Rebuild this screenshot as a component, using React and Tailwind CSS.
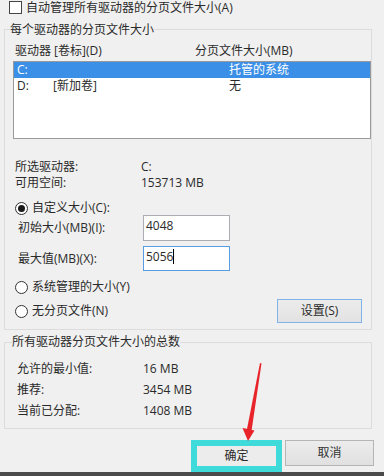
import React from 'react';

const Radio = ({ checked, label }) => (
  <div className="flex items-center">
    <div className="w-[13px] h-[13px] rounded-full border border-[#333] bg-white flex items-center justify-center">
      {checked && <div className="w-[7px] h-[7px] rounded-full bg-[#1a1a1a]" />}
    </div>
    <span className="ml-[4px] leading-[16px]">{label}</span>
  </div>
);

const InfoRow = ({ label, value, className = '' }) => (
  <div className={`flex h-[16px] items-center ${className}`}>
    <span className="w-[126px] shrink-0">{label}</span>
    <span>{value}</span>
  </div>
);

export default function App() {
  return (
    <div className="relative w-[384px] h-[476px] overflow-hidden bg-[#f0f0f0] text-[12px] text-[#2a2a2a] font-['Open_Sans','Noto_Sans_CJK_SC',sans-serif] flex flex-col">
      {/* top checkbox */}
      <div className="h-[21px] pt-[1px] pl-[9px] flex items-start">
        <div className="w-[13px] h-[13px] border border-[#444] bg-white" />
        <span className="ml-[4px] leading-[14px]">自动管理所有驱动器的分页文件大小(A)</span>
      </div>

      {/* per-drive group */}
      <fieldset className="ml-[4px] w-[368px] border border-[#dcdcdc] pb-[6px]">
        <legend className="ml-[5px] leading-[17px]">每个驱动器的分页文件大小</legend>

        <div className="mt-[5px] h-[16px] flex items-center pl-[10px]">
          <span className="w-[180px]">驱动器 [卷标](D)</span>
          <span>分页文件大小(MB)</span>
        </div>

        <div className="mt-[2px] ml-[8px] w-[358px] h-[78px] border border-[#9a9a9a] bg-white">
          <div className="h-[16px] bg-[#3b8fe6] text-white flex items-center">
            <span className="pl-[3px] w-[215px]">C:</span>
            <span>托管的系统</span>
          </div>
          <div className="h-[16px] flex items-center">
            <span className="pl-[3px] w-[39px]">D:</span>
            <span className="w-[176px]">[新加卷]</span>
            <span>无</span>
          </div>
        </div>

        <div className="pl-[10px]">
          <InfoRow className="mt-[20px]" label="所选驱动器:" value="C:" />
          <InfoRow label="可用空间:" value="153713 MB" />
        </div>

        <div className="mt-[10px] h-[14px] pl-[10px] flex items-center">
          <Radio checked label="自定义大小(C):" />
        </div>

        <div className="h-[26px] flex items-center pl-[13px]">
          <span className="w-[125px]">初始大小(MB)(I):</span>
          <div className="w-[87px] h-[26px] border border-[#abadb3] bg-white pl-[2px] pt-[2px] leading-[16px]">4048</div>
        </div>

        <div className="mt-[5px] h-[25px] flex items-center pl-[13px]">
          <span className="w-[125px]">最大值(MB)(X):</span>
          <div className="w-[87px] h-[25px] border border-[#569de5] bg-white pl-[2px] pt-[2px] leading-[16px] flex items-start">
            <span>5056</span>
            <span className="w-[1px] h-[15px] bg-black" />
          </div>
        </div>

        <div className="mt-[8px] h-[16px] pl-[10px] flex items-center">
          <Radio label="系统管理的大小(Y)" />
        </div>

        <div className="mt-[4px] h-[24px] pl-[10px] pr-[9px] flex items-center">
          <Radio label="无分页文件(N)" />
          <button className="ml-auto w-[85px] h-[24px] border border-[#7eb4ea] bg-gradient-to-b from-[#ececec] to-[#e2e2e2] text-[#2a2a2a]">设置(S)</button>
        </div>
      </fieldset>

      {/* totals group */}
      <fieldset className="mt-[4px] ml-[4px] w-[368px] border border-[#dcdcdc] pb-[9px]">
        <legend className="ml-[7px] leading-[16px]">所有驱动器分页文件大小的总数</legend>
        <div className="pl-[12px]">
          <InfoRow className="mt-[11px]" label="允许的最小值:" value="16 MB" />
          <InfoRow className="mt-[5px]" label="推荐:" value="3454 MB" />
          <InfoRow className="mt-[5px]" label="当前已分配:" value="1408 MB" />
        </div>
      </fieldset>

      {/* dialog buttons */}
      <div className="mt-[11px] pl-[191px] flex items-start">
        <div className="border-[6px] border-[#3fdada]">
          <button className="w-[79px] h-[20px] bg-[#ececec] text-[#2a2a2a] leading-[20px]">确定</button>
        </div>
        <button className="ml-[3px] w-[89px] h-[26px] border border-[#b5b5b5] bg-gradient-to-b from-[#ececec] to-[#e0e0e0] text-[#333]">取消</button>
      </div>

      <div className="mt-auto h-[4px] bg-[#4b4b4b]" />

      {/* red arrow annotation */}
      <svg className="absolute left-0 top-0 pointer-events-none" width="384" height="476" viewBox="0 0 384 476">
        <polygon points="260,363 261.5,363.5 251.5,431 246.8,430" fill="#e8232a" />
        <polygon points="242.5,428 254.5,430.5 248,441" fill="#e8232a" />
      </svg>
    </div>
  );
}
